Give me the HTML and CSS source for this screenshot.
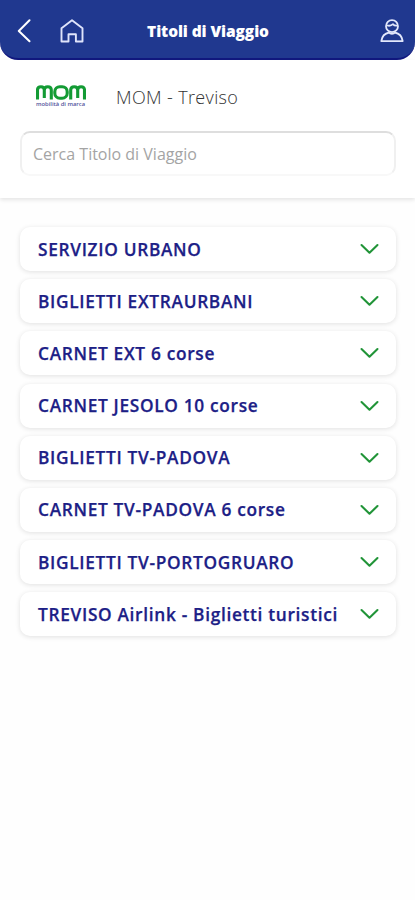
FILE: index.html
```html
<!DOCTYPE html>
<html lang="it">
<head>
<meta charset="utf-8">
<meta name="viewport" content="width=device-width, initial-scale=1">
<title>Titoli di Viaggio</title>
<link rel="stylesheet" href="styles.css">
</head>
<body>
<svg class="defs" aria-hidden="true"><symbol id="chevron" viewBox="0 0 20 12"><path d="M1.6 1.8 10 9.9l8.4-8.1"/></symbol></svg>
<header class="topbar">
  <div class="side">
    <svg class="icon back" viewBox="0 0 14 24"><path d="M12.5 1.3 1.8 12l10.7 10.3"/></svg>
    <svg class="icon home" viewBox="0 0 24 24"><path d="M1.5 9.2 12 1.3l10.5 7.9v13.3h-6.6v-7.2H8.5v7.2h-7z"/></svg>
  </div>
  <h1>Titoli di Viaggio</h1>
  <div class="side end">
    <svg class="icon user" viewBox="0 0 24 24"><circle cx="12" cy="7.2" r="6"/><path d="M7.2 6.5c2.8.7 4.6-.2 5.8-1.3.8 1.1 2.1 1.6 3.8 1.5M9.2 13.5c-4.5.9-7.2 3.7-7.9 8.6h21.4c-.7-4.9-3.4-7.7-7.9-8.6-1 1.8-4.6 1.8-5.6 0z"/></svg>
  </div>
</header>
<section class="search">
  <div class="company">
    <div class="logo">
      <svg class="mark" viewBox="0 0 50 16"><path d="M1.5 14.5V5q0-3.3 3.4-3.3T8.3 5v8M8.3 5q0-3.3 3.5-3.3T15.3 5v9.5M34.7 14.5V5q0-3.3 3.5-3.3T41.7 5v8M41.7 5q0-3.3 3.4-3.3T48.5 5v9.5"/><rect x="18.8" y="1.7" width="12.4" height="11.5" rx="5"/></svg>
      <span>mobilità di marca</span>
    </div>
    <span class="name">MOM - Treviso</span>
  </div>
  <input class="field" type="text" placeholder="Cerca Titolo di Viaggio">
</section>
<main class="list">
  <div class="card"><span>SERVIZIO URBANO</span><svg class="chev"><use href="#chevron"/></svg></div>
  <div class="card"><span>BIGLIETTI EXTRAURBANI</span><svg class="chev"><use href="#chevron"/></svg></div>
  <div class="card"><span>CARNET EXT 6 corse</span><svg class="chev"><use href="#chevron"/></svg></div>
  <div class="card"><span>CARNET JESOLO 10 corse</span><svg class="chev"><use href="#chevron"/></svg></div>
  <div class="card"><span>BIGLIETTI TV-PADOVA</span><svg class="chev"><use href="#chevron"/></svg></div>
  <div class="card"><span>CARNET TV-PADOVA 6 corse</span><svg class="chev"><use href="#chevron"/></svg></div>
  <div class="card"><span>BIGLIETTI TV-PORTOGRUARO</span><svg class="chev"><use href="#chevron"/></svg></div>
  <div class="card"><span>TREVISO Airlink - Biglietti turistici</span><svg class="chev"><use href="#chevron"/></svg></div>
</main>
</body>
</html>
```
FILE: styles.css
```css
* { box-sizing: border-box; }
body {
  margin: 0;
  min-height: 900px;
  background: #fefefe;
  font-family: "Open Sans", sans-serif;
}
.defs { display: none; }
.topbar {
  height: 60px;
  padding: 4px 11px 0 17px;
  display: grid;
  grid-template-columns: 92px 1fr 97px;
  align-items: center;
  background: #20388f;
  border-bottom: 2px solid #11187f;
  border-radius: 0 0 18px 18px;
}
.side { display: flex; align-items: center; gap: 29px; }
.end { justify-content: flex-end; }
.icon { fill: none; stroke: #fff; stroke-linejoin: round; stroke-linecap: round; }
.back { width: 14px; height: 24px; stroke-width: 2; }
.home { width: 24px; height: 24px; stroke: #dfe4fb; stroke-width: 1.9; }
.user { width: 24px; height: 24px; stroke: #e2e7fb; stroke-width: 1.8; }
.topbar h1 {
  margin: 0;
  text-align: center;
  color: #fff;
  font-size: 15.5px;
  line-height: 22px;
  font-weight: 800;
  letter-spacing: -.1px;
  white-space: nowrap;
}
.search {
  height: 138px;
  padding: 20px 19px 0 20px;
  background: #fff;
  box-shadow: 0 2px 4px rgba(0, 0, 0, .1);
}
.company { height: 33px; display: flex; align-items: center; padding-left: 16px; }
.logo { width: 50px; margin: -2px 30px 0 0; display: flex; flex-direction: column; }
.mark { width: 50px; height: 16px; fill: none; stroke: #139b34; stroke-width: 3.1; }
.logo span {
  color: #53549c;
  font-size: 5.8px;
  line-height: 6px;
  font-weight: 600;
  white-space: nowrap;
}
.name { color: #333; font-size: 18px; line-height: 24px; font-weight: 300; letter-spacing: .36px; }
.field {
  display: block;
  width: 100%;
  height: 45px;
  margin-top: 18px;
  padding: 1px 11px 0;
  border: 2px solid #f0f0f0;
  border-top-color: #dedede;
  border-bottom-color: #f8f8f8;
  border-radius: 10px;
  outline: 0;
  background: #fff;
  font: 16px "Open Sans", sans-serif;
}
.field::placeholder { color: #a4a4a4; opacity: 1; }
.list { padding: 29px 19px 0 20px; display: grid; gap: 8.2px; }
.card {
  height: 44px;
  padding: 1px 17px 0 18px;
  display: flex;
  align-items: center;
  justify-content: space-between;
  background: #fff;
  border-radius: 10px;
  box-shadow: 0 1px 5px rgba(0, 0, 0, .12);
  color: #1c2086;
  font-size: 17.3px;
  letter-spacing: .68px;
  -webkit-text-stroke: .25px #1c2086;
  line-height: 24px;
  font-weight: 600;
  white-space: nowrap;
}
.chev { width: 19px; height: 12px; margin-top: -1px; fill: none; stroke: #219438; stroke-width: 2.2; stroke-linecap: round; stroke-linejoin: round; }
```
